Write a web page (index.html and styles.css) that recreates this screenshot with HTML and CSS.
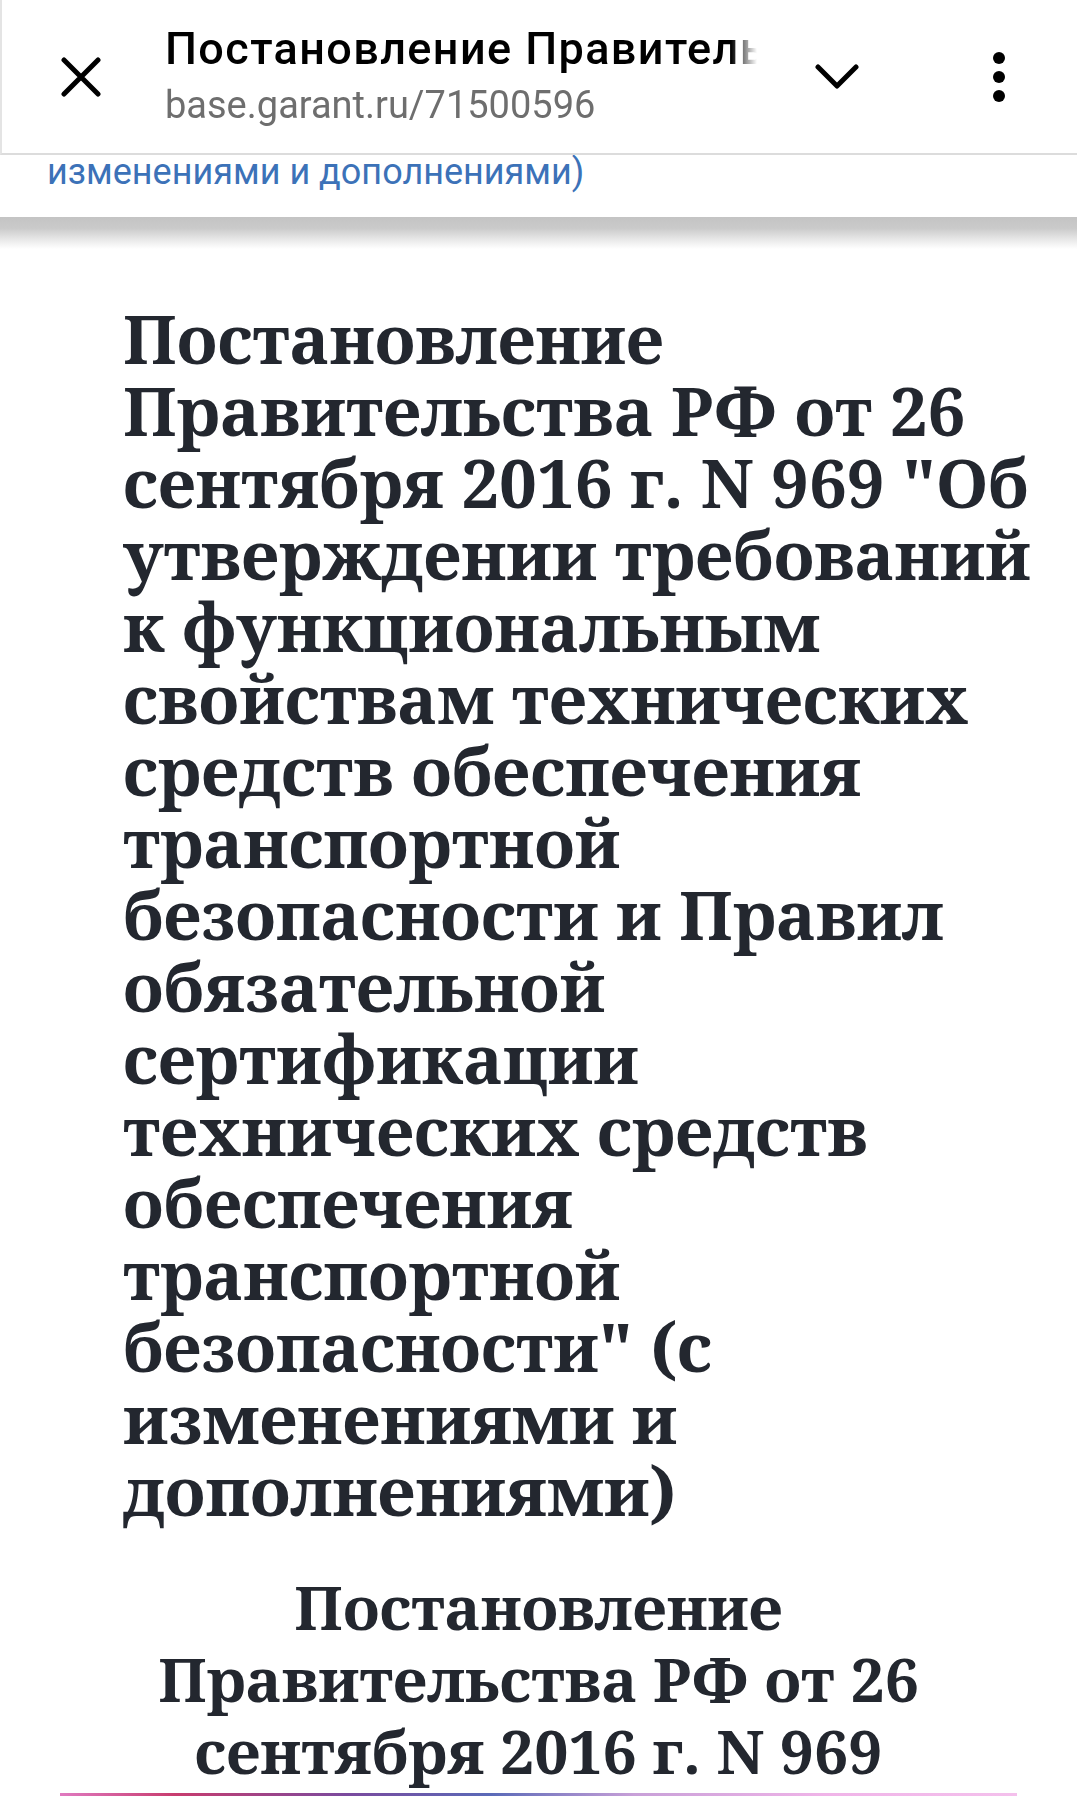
FILE: index.html
```html
<!DOCTYPE html>
<html lang="ru">
<head>
<meta charset="utf-8">
<title>Постановление Правительства РФ от 26 сентября 2016 г. N 969</title>
<link rel="stylesheet" href="styles.css">
</head>
<body>
<header class="topbar">
  <button class="icon-btn close" aria-label="Закрыть">
    <svg viewBox="0 0 40 40" width="40" height="40"><path d="M3 3 L37 37 M37 3 L3 37" stroke="#000" stroke-width="5" stroke-linecap="round" fill="none"/></svg>
  </button>
  <div class="titles">
    <div class="page-title">Постановление Правительства РФ от 26 сентября 2016 г. N 969</div>
    <div class="page-url">base.garant.ru/71500596</div>
  </div>
  <button class="icon-btn chevron" aria-label="Развернуть">
    <svg viewBox="0 0 44 26" width="44" height="26"><path d="M3 3 L22 22 L41 3" stroke="#000" stroke-width="5" stroke-linecap="round" stroke-linejoin="round" fill="none"/></svg>
  </button>
  <button class="icon-btn kebab" aria-label="Меню">
    <span class="dot"></span><span class="dot"></span><span class="dot"></span>
  </button>
</header>
<div class="sticky-head">
  <a class="sticky-link" href="#">изменениями и дополнениями)</a>
</div>
<div class="sticky-shadow"></div>
<main class="content">
  <h1 class="doc-title">Постановление Правительства РФ от 26 сентября 2016 г. N 969 "Об утверждении требований к функциональным свойствам технических средств обеспечения транспортной безопасности и Правил обязательной сертификации технических средств обеспечения транспортной безопасности" (с изменениями и дополнениями)</h1>
  <h2 class="doc-subtitle">Постановление Правительства РФ от 26 сентября 2016 г. N 969</h2>
  <div class="accent-line"></div>
</main>
</body>
</html>
```
FILE: styles.css
```css
html, body {
  margin: 0;
  padding: 0;
  background: #ffffff;
}
body {
  width: 1077px;
  height: 1796px;
  overflow: hidden;
  font-family: Roboto, "Noto Sans", sans-serif;
}
.topbar {
  box-sizing: border-box;
  height: 155px;
  border-bottom: 2px solid #dcdcdc;
  border-left: 2px solid #e4e4e4;
  display: flex;
  align-items: center;
  background: #fff;
}
.icon-btn {
  border: 0;
  background: transparent;
  padding: 0;
  display: flex;
  align-items: center;
  justify-content: center;
}
.close {
  margin-left: 59px;
  width: 40px;
  height: 40px;
}
.titles {
  margin-left: 64px;
  width: 592px;
  overflow: hidden;
  white-space: nowrap;
  -webkit-mask-image: linear-gradient(to right, #000 0, #000 566px, transparent 592px);
  mask-image: linear-gradient(to right, #000 0, #000 566px, transparent 592px);
}
.page-title {
  font-size: 45px;
  font-weight: 500;
  letter-spacing: 1.4px;
  line-height: 52px;
  color: #000;
}
.page-url {
  font-size: 38px;
  line-height: 50px;
  margin-top: 5px;
  color: #6e6e6e;
}
.chevron {
  margin-left: 58px;
  width: 44px;
  height: 26px;
}
.kebab {
  margin-left: 133px;
  width: 14px;
  flex-direction: column;
  gap: 7px;
}
.dot {
  width: 12px;
  height: 12px;
  border-radius: 50%;
  background: #000;
}
.sticky-head {
  height: 62px;
  overflow: hidden;
  padding-left: 47px;
  background: #fff;
}
.sticky-link {
  display: block;
  font-size: 36px;
  line-height: 34px;
  color: #3c72b8;
  text-decoration: none;
}
.sticky-shadow {
  height: 32px;
  background: linear-gradient(to bottom, #c4c4c4 0%, #cacaca 35%, #ececec 75%, #ffffff 100%);
}
.content {
  padding: 0 60px;
}
.doc-title {
  margin: 53px -40px 0 63px;
  font-family: "Noto Serif", "DejaVu Serif", serif;
  font-weight: 700;
  font-size: 67px;
  line-height: 72px;
  color: #23272f;
}
.doc-subtitle {
  margin: 45px 0 0 0;
  text-align: center;
  font-family: "Noto Serif", "DejaVu Serif", serif;
  font-weight: 700;
  font-size: 60.5px;
  line-height: 72px;
  color: #23272f;
}
.accent-line {
  height: 3px;
  margin-top: 6px;
  background: linear-gradient(to right, #e07ac0 0%, #c83c6e 12%, #7a4a9e 30%, #5a6ab8 45%, #c8a0d8 60%, #f0b4e8 80%, #f4c0ec 100%);
}
```
